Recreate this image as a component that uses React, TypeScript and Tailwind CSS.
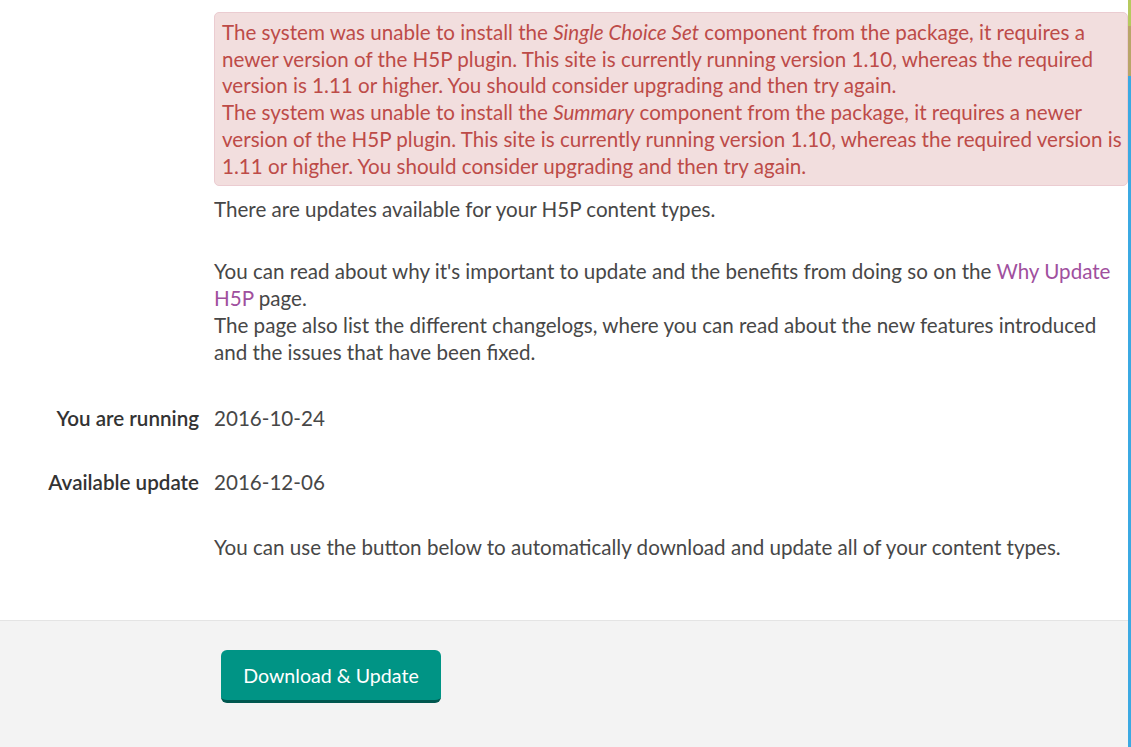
import React from "react";

export default function App() {
  const font = { fontFamily: "Lato, 'Open Sans', sans-serif" };
  return (
    <div className="relative w-[1131px] h-[747px] bg-white overflow-hidden text-[20.6px] leading-[27px] text-[#474747]" style={font}>
      <div className="absolute right-0 top-0 w-[3px] h-full flex flex-col">
        <div className="h-[26px] bg-[#b6c95e]" />
        <div className="h-[50px] bg-[#b9a569]" />
        <div className="flex-1 bg-[#3ba9e2]" />
      </div>
      <div className="pr-[3px]">
        <div className="grid grid-cols-[199px_1fr] gap-x-[15px] pt-[12px]">
          <div />
          <div className="bg-[#f2dede] border border-[#ebccd1] rounded-[5px] pl-[7px] pr-[2px] py-[6px] text-[#bd4b48] leading-[26.7px]">
            <div>
              The system was unable to install the <em>Single Choice Set</em> component from the package, it requires a newer version of the H5P plugin. This site is currently running version 1.10, whereas the required version is 1.11 or higher. You should consider upgrading and then try again.
            </div>
            <div>
              The system was unable to install the <em>Summary</em> component from the package, it requires a newer version of the H5P plugin. This site is currently running version 1.10, whereas the required version is 1.11 or higher. You should consider upgrading and then try again.
            </div>
          </div>
          <div />
          <div className="pt-[10px] pr-[10px]">
            <p>There are updates available for your H5P content types.</p>
            <p className="mt-[35px]">
              You can read about why it's important to update and the benefits from doing so on the{" "}
              <a className="text-[#a0509e]">Why Update H5P</a> page.
              <br />
              The page also list the different changelogs, where you can read about the new features introduced and the issues that have been fixed.
            </p>
          </div>
          <div className="mt-[39px] text-right font-semibold text-[#333]">You are running</div>
          <div className="mt-[39px]">2016-10-24</div>
          <div className="mt-[37px] text-right font-semibold text-[#333]">Available update</div>
          <div className="mt-[37px]">2016-12-06</div>
          <div />
          <div className="mt-[38px]">You can use the button below to automatically download and update all of your content types.</div>
        </div>
        <div className="mt-[59px] border-t border-[#e4e4e4] bg-[#f3f3f3] h-[200px] pt-[29px] pl-[221px]">
          <button className="h-[53px] w-[220px] rounded-[6px] bg-[#009485] border-b-[3px] border-[#00574f] text-white text-[19.6px]">
            Download &amp; Update
          </button>
        </div>
      </div>
    </div>
  );
}
